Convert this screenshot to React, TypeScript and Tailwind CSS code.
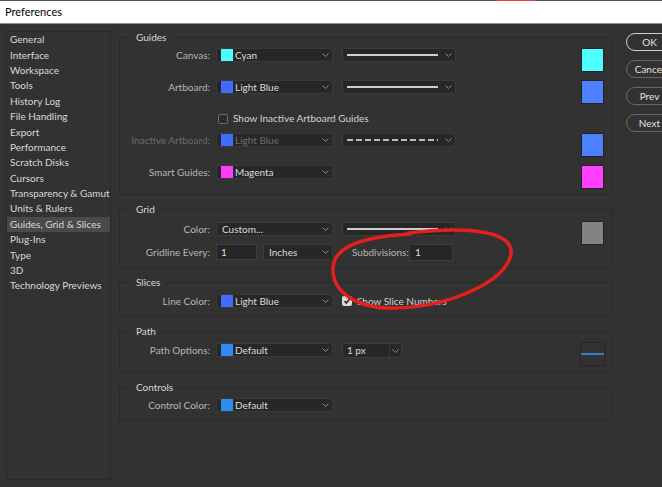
import React from "react";

const Chevron = ({ className = "" }: { className?: string }) => (
  <svg width="7" height="4" viewBox="0 0 7 4" className={className}>
    <polyline points="0.5,0.5 3.5,3.5 6.5,0.5" fill="none" stroke="#8a8a8a" strokeWidth="1" />
  </svg>
);

// dropdown with optional color chip
const Select = ({
  text,
  chip,
  className = "w-[117px] h-[14px]",
  disabled = false,
}: {
  text: string;
  chip?: string;
  className?: string;
  disabled?: boolean;
}) => (
  <div className={`flex items-center bg-[#272727] border border-[#3a3a3a] rounded-[2px] shrink-0 ${className}`}>
    {chip ? (
      <span className={`ml-[4px] w-[12px] h-[12px] shrink-0 ${chip}`} />
    ) : null}
    <span className={`${chip ? "ml-[2px]" : "ml-[5px]"} leading-[12px] ${disabled ? "text-[#6c6c6c]" : "text-[#dcdcdc]"}`}>
      {text}
    </span>
    <Chevron className="ml-auto mr-[3px]" />
  </div>
);

const LineSelect = ({ dashed = false }: { dashed?: boolean }) => (
  <div className="ml-[9px] w-[114px] h-[14px] flex items-center bg-[#272727] border border-[#3a3a3a] rounded-[2px] shrink-0">
    <svg width="92" height="4" className="ml-[4px]">
      {dashed ? (
        <line x1="0" y1="2" x2="91" y2="2" stroke="#bdbdbd" strokeWidth="2" strokeDasharray="6 3" />
      ) : (
        <line x1="0" y1="2" x2="91" y2="2" stroke="#cdcdcd" strokeWidth="2" />
      )}
    </svg>
    <Chevron className="ml-auto mr-[3px]" />
  </div>
);

const Label = ({ children, disabled = false }: { children: React.ReactNode; disabled?: boolean }) => (
  <div className={`w-[90px] shrink-0 text-right leading-[14px] ${disabled ? "text-[#6c6c6c]" : "text-[#b6b6b6]"}`}>
    {children}
  </div>
);

const Swatch = ({ color }: { color: string }) => (
  <div className={`ml-auto mr-[7px] w-[23px] h-[24px] border border-[#222] shrink-0 ${color}`} />
);

const Box = ({ title, className = "", children }: { title: string; className?: string; children: React.ReactNode }) => (
  <fieldset className={`w-[493px] border border-[#292929] ${className}`}>
    <legend className="ml-[11px] px-[5px] leading-[14px] text-[#d6d6d6]">{title}</legend>
    {children}
  </fieldset>
);

const sidebar = [
  "General",
  "Interface",
  "Workspace",
  "Tools",
  "History Log",
  "File Handling",
  "Export",
  "Performance",
  "Scratch Disks",
  "Cursors",
  "Transparency & Gamut",
  "Units & Rulers",
  "Guides, Grid & Slices",
  "Plug-Ins",
  "Type",
  "3D",
  "Technology Previews",
];

const Btn = ({ children, primary = false }: { children: React.ReactNode; primary?: boolean }) => (
  <div
    className={`w-[47px] h-[18px] rounded-full border flex items-center justify-center text-[#e2e2e2] ${
      primary ? "border-[#cfcfcf]" : "border-[#666]"
    }`}
  >
    {children}
  </div>
);

export default function App() {
  return (
    <div className="relative w-[662px] h-[487px] overflow-hidden bg-[#323232] text-[10px] whitespace-nowrap font-['Lato',sans-serif]">
      {/* title bar */}
      <div className="relative h-[24px] bg-white border-t border-b border-t-[#555] border-b-[#8c8c8c] flex items-center pl-[5px] text-[11px] text-black">
        Preferences
        <div className="absolute left-[497px] top-[-1px] w-[38px] h-[1px] bg-[#e8413c]" />
      </div>

      <div className="flex">
        {/* sidebar */}
        <div className="ml-[6px] mt-[7px] w-[105px] h-[449px] border border-[#292929] shrink-0">
          {sidebar.map((s) => (
            <div
              key={s}
              className={`h-[15.4px] flex items-center pl-[3px] text-[#d8d8d8] ${
                s === "Guides, Grid & Slices" ? "bg-[#4a4a4a]" : ""
              }`}
            >
              {s}
            </div>
          ))}
        </div>

        {/* main */}
        <div className="ml-[8px] mt-[6px] flex flex-col shrink-0">
          <Box title="Guides" className="pb-[5px]">
            <div className="flex items-start h-[24px] mt-[4px]">
              <Label>Canvas:</Label>
              <div className="ml-[6px]"><Select text="Cyan" chip="bg-[#4dfefe]" /></div>
              <LineSelect />
              <Swatch color="bg-[#4dfefe]" />
            </div>
            <div className="flex items-start h-[24px] mt-[8px]">
              <Label>Artboard:</Label>
              <div className="ml-[6px]"><Select text="Light Blue" chip="bg-[#3f6cff]" /></div>
              <LineSelect />
              <Swatch color="bg-[#4c80ff]" />
            </div>
            <div className="h-[29px] pt-[9px]">
              <div className="flex items-center h-[11px] ml-[98px]">
                <span className="w-[10px] h-[10px] rounded-[2px] border border-[#6b6b6b] bg-[#2b2b2b]" />
                <span className="ml-[5px] text-[#d2d2d2]">Show Inactive Artboard Guides</span>
              </div>
            </div>
            <div className="flex items-start h-[24px]">
              <Label disabled>Inactive Artboard:</Label>
              <div className="ml-[6px]"><Select text="Light Blue" chip="bg-[#3f6cff]" disabled /></div>
              <LineSelect dashed />
              <Swatch color="bg-[#4c80ff]" />
            </div>
            <div className="flex items-start h-[24px] mt-[8px]">
              <Label>Smart Guides:</Label>
              <div className="ml-[6px]"><Select text="Magenta" chip="bg-[#ff3cf5]" /></div>
              <Swatch color="bg-[#ff40ff]" />
            </div>
          </Box>

          <Box title="Grid" className="mt-[7px] pb-[7px]">
            <div className="flex items-start">
              <div className="flex flex-col">
                <div className="flex items-start mt-[6px]">
                  <Label>Color:</Label>
                  <div className="ml-[6px]"><Select text="Custom..." /></div>
                  <LineSelect />
                </div>
                <div className="flex items-center mt-[8px] h-[16px]">
                  <Label>Gridline Every:</Label>
                  <div className="ml-[6px] w-[41px] h-[16px] bg-[#262626] border border-[#3d3d3d] pl-[4px] leading-[14px] text-[#dcdcdc]">1</div>
                  <div className="ml-[6px]"><Select text="Inches" className="w-[70px] h-[16px]" /></div>
                  <div className="ml-[19px] w-[53px] text-right text-[#b6b6b6]">Subdivisions:</div>
                  <div className="ml-[4px] w-[44px] h-[17px] bg-[#262626] border border-[#3d3d3d] pl-[5px] leading-[15px] text-[#dcdcdc]">1</div>
                </div>
              </div>
              <div className="ml-auto mt-[5px]">
                <Swatch color="bg-[#838383]" />
              </div>
            </div>
          </Box>

          <Box title="Slices" className="mt-[7px] pb-[7px]">
            <div className="flex items-center mt-[5px] h-[14px]">
              <Label>Line Color:</Label>
              <div className="ml-[6px]"><Select text="Light Blue" chip="bg-[#3f6cff]" /></div>
              <span className="ml-[9px] w-[10px] h-[10px] rounded-[2px] bg-[#d9d9d9] flex items-center justify-center">
                <svg width="8" height="8" viewBox="0 0 8 8">
                  <polyline points="1.5,4 3.3,6 6.8,1.8" fill="none" stroke="#2a2a2a" strokeWidth="1.6" />
                </svg>
              </span>
              <span className="ml-[5px] text-[#d2d2d2]">Show Slice Numbers</span>
            </div>
          </Box>

          <Box title="Path" className="mt-[8px] pb-[5px]">
            <div className="flex items-start">
              <div className="flex items-start mt-[5px]">
                <Label>Path Options:</Label>
                <div className="ml-[6px]"><Select text="Default" chip="bg-[#2d8bf2]" /></div>
                <div className="ml-[9px] w-[60px] h-[15px] flex bg-[#272727] border border-[#3a3a3a] rounded-[2px]">
                  <span className="ml-[4px] leading-[13px] text-[#dcdcdc]">1 px</span>
                  <div className="ml-auto w-[12px] border-l border-[#3a3a3a] flex items-center justify-center">
                    <Chevron />
                  </div>
                </div>
              </div>
              <div className="ml-auto mr-[6px] mt-[4px] w-[25px] h-[24px] border border-[#262626] flex items-center">
                <div className="w-full h-[2px] bg-[#3b79c0]" />
              </div>
            </div>
          </Box>

          <Box title="Controls" className="mt-[8px] pb-[8px]">
            <div className="flex items-start mt-[4px]">
              <Label>Control Color:</Label>
              <div className="ml-[6px]"><Select text="Default" chip="bg-[#2d8bf2]" /></div>
            </div>
          </Box>
        </div>

        {/* buttons */}
        <div className="ml-[14px] pt-[9px] flex flex-col gap-[9px] shrink-0">
          <Btn primary>OK</Btn>
          <Btn>Cancel</Btn>
          <Btn>Prev</Btn>
          <Btn>Next</Btn>
        </div>
      </div>

      {/* hand-drawn red ellipse */}
      <svg className="absolute left-0 top-0 pointer-events-none" width="662" height="487">
        <path
          d="M 408 233 C 468 226, 514 231, 511 254 C 507 281, 450 307, 395 308 C 355 309, 332 291, 333 268 C 334 248, 358 237, 410 234"
          fill="none"
          stroke="#e3201c"
          strokeWidth="3.5"
          strokeLinecap="round"
        />
      </svg>
    </div>
  );
}
